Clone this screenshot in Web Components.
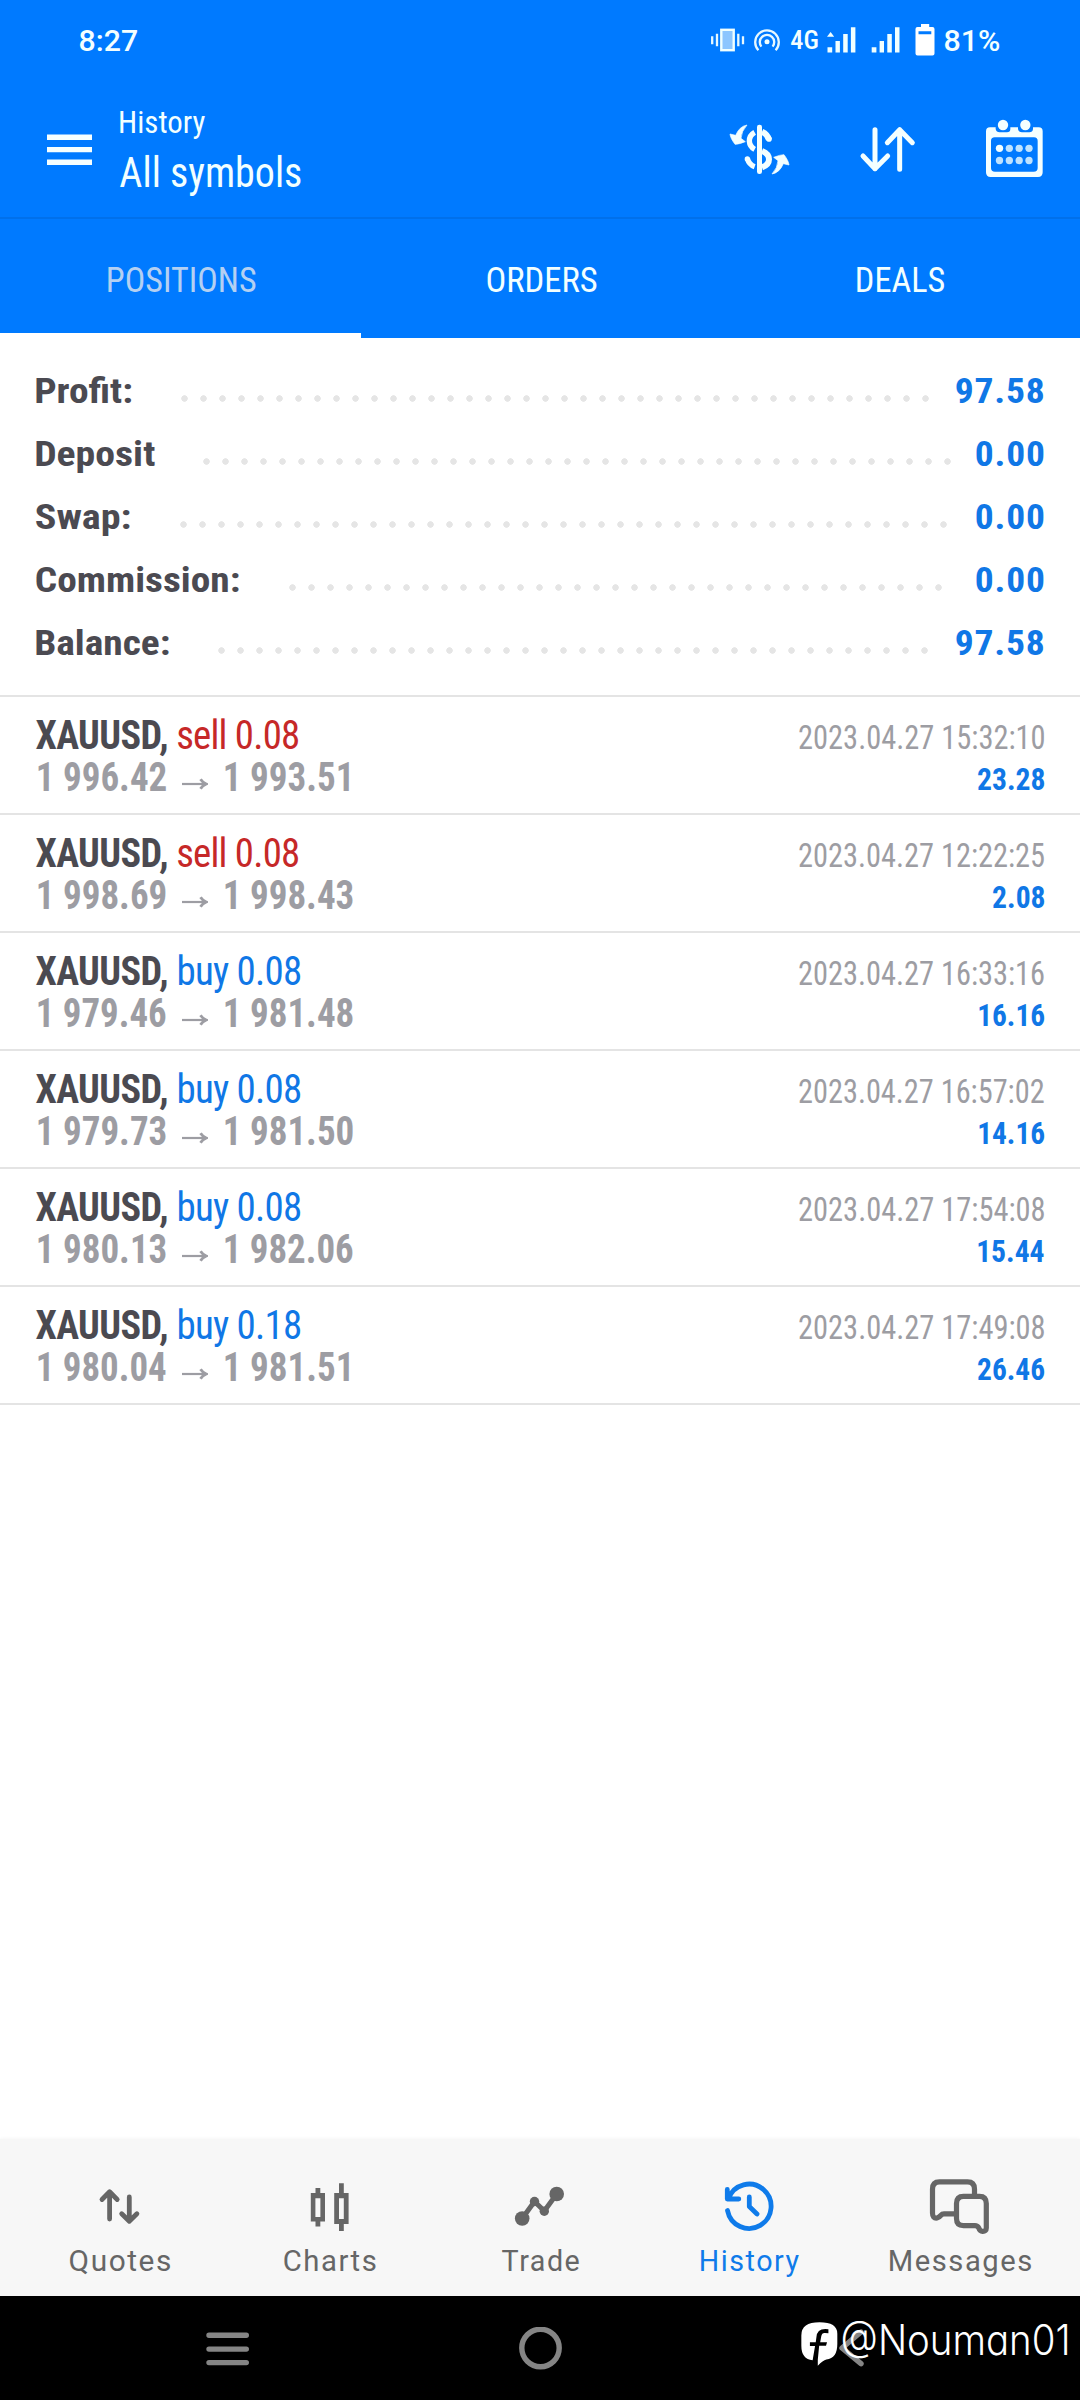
<!DOCTYPE html>
<html lang="en">
<head>
<meta charset="utf-8">
<title>History</title>
<style>
html,body{margin:0;padding:0;background:#fff}
body{width:1080px;height:2400px;overflow:hidden;font-family:"Roboto Condensed",Roboto,"Liberation Sans",sans-serif}
</style>
</head>
<body>
<trade-app></trade-app>
<script>
const pen = document.createElement('canvas').getContext('2d');

/* A word fitted to its ink box: w = ink width, h = capital height. */
class FitText extends HTMLElement {
  connectedCallback() {
    if (this.shadowRoot) return;
    const w = +this.getAttribute('w'), h = +this.getAttribute('h');
    const weight = this.getAttribute('weight') || 400;
    const ls = +(this.getAttribute('ls') || 0);
    const wide = this.hasAttribute('wide'), light = this.hasAttribute('inter');
    const fam = light ? 'Inter, sans-serif' : wide ? 'Roboto, sans-serif' : '"Roboto Condensed", Roboto, sans-serif';
    const size = h / (light ? .727 : .711);
    const st = wide || light ? 'normal' : 'condensed';
    /* measured at ten times the size, so that rounded bounds do not matter */
    pen.font = `${weight} ${size * 10}px ${fam}`;
    pen.fontStretch = st;
    pen.letterSpacing = ls * 10 + 'px';
    const m = pen.measureText(this.textContent.trim());
    const left = m.actualBoundingBoxLeft / 10;
    const ink = m.actualBoundingBoxRight / 10 + left;
    const k = w / ink;
    const A = Math.round(m.fontBoundingBoxAscent / 10), D = Math.round(m.fontBoundingBoxDescent / 10);
    const dy = h - ((h - (A + D)) / 2 + A);
    this.attachShadow({mode: 'open'}).innerHTML = `<style>
      :host{display:block;flex:none;width:${w}px;height:${h}px}
      span{display:inline-block;white-space:pre;font:${weight} ${size}px/${h}px ${fam};font-stretch:${st};letter-spacing:${ls}px;
        vertical-align:top;height:${h}px;transform-origin:0 0;transform:translate(${left * k}px,${dy}px) scaleX(${k});
        ${light ? 'font-feature-settings:"cv11","ss03";' : ''}}
    </style><span><slot></slot></span>`;
  }
}
customElements.define('fit-text', FitText);

class StatusBar extends HTMLElement {
  constructor() {
    super();
    this.attachShadow({mode: 'open'}).innerHTML = `<style>
      :host{display:flex;height:83px;box-sizing:border-box;padding:24px 81px 0 80px;justify-content:space-between;align-items:flex-start;color:#f4ffff}
      .t{padding-top:6px}
      .r{display:flex;align-items:flex-start}
      .g{margin-top:7.700px}
      .b{margin-top:5.800px}
      svg{display:block;flex:none}
    </style>
    <fit-text class="t" w="57" h="21.5" weight="500" wide>8:27</fit-text>
    <div class="r">
      <svg width="80" height="32" viewBox="711 24 80 32" fill="none" stroke="#e6f8ff" stroke-width="2.3">
        <rect x="721.3" y="29.8" width="12.4" height="20.4" fill="#8cc6ff" stroke="#f0ffff" stroke-width="2.4"/>
        <path d="M712.2 36.3v8M717 33.7v12.6M738.3 33.7v12.6M743 36.3v8"/>
        <circle cx="767" cy="41.8" r="2.5" fill="#f0ffff" stroke="none"/>
        <path d="M761.4 46.6a7.2 7.2 0 1 1 11.2 0M758.4 50.3a11.8 11.8 0 1 1 17.2 0"/>
      </svg>
      <fit-text class="g" w="26.500" h="17.8" weight="500">4G</fit-text>
      <svg style="margin-left:9px" width="118" height="33" viewBox="826.500 24 118 33" fill="#f0ffff">
        <path d="M826.5 36.7l3.6-4.8 3.6 4.8zM827 47.3h4.7v5.2H827zM835 41h4.4v11.5H835zM842.7 34h4.5v18.5h-4.5zM850.4 27.3h4.5v25.2h-4.5zM871.2 47.3h4.7v5.2h-4.7zM879.1 41h4.4v11.5h-4.4zM886.8 34h4.5v18.5h-4.5zM894.5 27.3h4.5v25.2h-4.5z"/>
        <path fill-rule="evenodd" fill="#fff" d="M920.5 24h8.2v3H932q2 0 2 2v24.5q0 2-2 2h-15q-2 0-2-2V29q0-2 2-2h3.500zM918 31.200v3.100h12.800v-3.100z"/>
      </svg>
      <fit-text class="b" w="54.5" h="21.5" weight="500" wide>81%</fit-text>
    </div>`;
  }
}
customElements.define('status-bar', StatusBar);

class AppHeader extends HTMLElement {
  constructor() {
    super();
    this.attachShadow({mode: 'open'}).innerHTML = `<style>
      :host{display:flex;height:134px;box-sizing:border-box;padding:27.5px 36px 0 47px;align-items:flex-start;color:#f2ffff}
      svg{display:block;flex:none}
      .m{margin-top:23.500px}
      .n{flex:1;margin-left:28px;display:flex;flex-direction:column;gap:24px}
      .i{margin-top:4.500px}
    </style>
    <svg class="m" width="45" height="32" viewBox="0 0 45 32"><path fill="#f6ffff" d="M0 .5h45V6H0zM0 13h45v5.300H0zM0 25.500h45V31H0z"/></svg>
    <div class="n"><fit-text w="85" h="22.8">History</fit-text><fit-text w="181" h="30.300">All symbols</fit-text></div>
    <svg class="i" width="318" height="64" viewBox="78 75 954 192" fill="#f4ffff">
      <rect x="171" y="104" width="15" height="148" rx="7"/>
      <path fill="none" stroke="#f4ffff" stroke-width="16" stroke-linecap="butt" d="M164 127Q148 136 148 153Q149 170 164 178M142 205Q147 224 164 230"/>
      <path fill="none" stroke="#f4ffff" stroke-width="18" d="M186 125Q203 133 207 149M186 183Q207 191 207 208Q207 225 186 232"/>
      <circle cx="207" cy="147" r="8.500"/><circle cx="142" cy="207" r="8"/>
      <path d="M141 105Q118 109 107 136L90 132Q91 144 105 163Q116 163 136 155L123 145Q124 124 141 105Z" stroke="#f4ffff" stroke-width="2" stroke-linejoin="round"/>
      <path transform="rotate(180 178.500 178.500)" d="M141 105Q118 109 107 136L90 132Q91 144 105 163Q116 163 136 155L123 145Q124 124 141 105Z" stroke="#f4ffff" stroke-width="2" stroke-linejoin="round"/>
      <path fill="none" stroke="#f4ffff" stroke-width="15" stroke-linecap="round" stroke-linejoin="round" d="M525 119V236M489 198l36 38 38-38M599 238V119M562 158l37-39 38 39"/>
      <path fill-rule="evenodd" d="M870 112H887V117Q889 127 899 127H921Q931 127 931 117V112H954V117Q956 127 966 127H988Q998 127 999 117V112H1016Q1028 112 1028 124V247Q1028 261 1014 261H872Q858 261 858 247V124Q858 112 870 112ZM884 142Q873 142 873 153V234Q873 245 885 245H1001Q1013 245 1013 234V153Q1013 142 1002 142Z"/>
      <circle cx="909" cy="105" r="15.500"/><circle cx="976" cy="105" r="15.500"/>
      <circle cx="898.500" cy="175" r="11"/>
      <g fill="#bfe3ff"><circle cx="928" cy="175" r="11"/><circle cx="957.500" cy="175" r="11"/><circle cx="987" cy="175" r="11"/><circle cx="898.500" cy="211.500" r="11"/><circle cx="928" cy="211.500" r="11"/><circle cx="957.500" cy="211.500" r="11"/><circle cx="987" cy="211.500" r="11"/></g>
    </svg>`;
  }
}
customElements.define('app-header', AppHeader);

class TabBar extends HTMLElement {
  constructor() {
    super();
    this.attachShadow({mode: 'open'}).innerHTML = `<style>
      :host{display:flex;height:121px;box-sizing:border-box;border-top:2px solid #0070eb;color:#f2ffff}
      div{flex:1;display:flex;justify-content:center;padding-top:48px;padding-left:1px;box-sizing:border-box}
      .on{border-bottom:5px solid #fff;color:#b4d0f2;padding-left:3px}
    </style>
    <div class="on"><fit-text w="147.500" h="25">POSITIONS</fit-text></div>
    <div><fit-text w="109.500" h="25">ORDERS</fit-text></div>
    <div><fit-text w="87" h="25">DEALS</fit-text></div>`;
  }
}
customElements.define('tab-bar', TabBar);

/* label, dotted leader and value; start = left edge of the leader, n = its dots */
class SummaryRow extends HTMLElement {
  connectedCallback() {
    if (this.shadowRoot) return;
    const a = n => this.getAttribute(n);
    this.attachShadow({mode: 'open'}).innerHTML = `<style>
      :host{display:flex;height:24.500px;padding:0 36.500px 0 36px;justify-content:flex-start}
      .l{color:#4b4a51}
      .d{flex:none;margin-left:${a('start') - 36 - a('lw')}px;margin-top:10px;width:${a('n') * 19}px;height:19px;
        background:radial-gradient(circle at 50% 50%,#e5e5e5 2.900px,rgba(229,229,229,0) 3.600px) 0 0/19px 19px repeat-x}
      .v{margin-left:auto;color:#1077e6}
    </style>
    <fit-text class="l" w="${a('lw')}" h="24.500" weight="700">${a('label')}</fit-text>
    <div class="d"></div>
    <fit-text class="v" w="${a('vw')}" h="24.500" weight="700" ls=".700">${a('value')}</fit-text>`;
  }
}
customElements.define('summary-row', SummaryRow);

class DealRow extends HTMLElement {
  connectedCallback() {
    if (this.shadowRoot) return;
    const a = n => this.getAttribute(n), sell = a('side').startsWith('sell');
    this.attachShadow({mode: 'open'}).innerHTML = `<style>
      :host{display:flex;height:118px;box-sizing:border-box;border-bottom:2px solid #e4e4e4;padding:24px 36px 0 35.500px;justify-content:space-between}
      .c,.r{display:flex;flex-direction:column}
      .c{gap:13.500px}
      .ln{display:flex}
      .s{color:#4b4a51}.t{color:${sell ? '#c62828' : '#1077e6'};margin-left:${sell ? 12 : 12.5}px}
      .p{color:#9d9da3;padding-left:2px}
      svg{display:block;margin:14px 16.500px 0 16.500px}
      .r{align-items:flex-end;padding-top:5px;gap:19.200px}
      .dt{color:#9d9da3}.pr{color:#1077e6}
    </style>
    <div class="c">
      <div class="ln"><fit-text class="s" w="130.500" h="28.300" weight="700" ls="-.600">XAUUSD,</fit-text><fit-text class="t" w="${sell ? 120 : 121}" h="28.300" ls="-.800">${a('side')}</fit-text></div>
      <div class="ln p"><fit-text w="128" h="28.300" weight="700">${a('from')}</fit-text>
        <svg width="26" height="14" viewBox="0 0 26 14" fill="none" stroke="#9d9da3" stroke-width="2.200"><path d="M0 7H23"/><path d="M18.500 2.300Q20.500 5.500 24.300 7Q20.500 8.500 18.500 11.700" stroke-width="2.800"/></svg>
        <fit-text w="${a('tw') || 128}" h="28.300" weight="700">${a('to')}</fit-text></div>
    </div>
    <div class="r">
      <fit-text class="dt" w="245" h="23">${a('time')}</fit-text>
      <fit-text class="pr" w="${a('pw')}" h="22.800" weight="700">${a('profit')}</fit-text>
    </div>`;
  }
}
customElements.define('deal-row', DealRow);

class NavItem extends HTMLElement {
  connectedCallback() {
    if (this.shadowRoot) return;
    this.attachShadow({mode: 'open'}).innerHTML = `<style>
      :host{flex:1;display:flex;flex-direction:column;align-items:center;color:${this.hasAttribute('active') ? '#0f7bea' : '#666'}}
      ::slotted(svg){display:block;overflow:visible;margin-bottom:9.500px}
    </style><slot></slot><fit-text w="${this.getAttribute('w')}" h="21.500" ls="1.600" wide>${this.getAttribute('label')}</fit-text>`;
  }
}
customElements.define('nav-item', NavItem);

class BottomNav extends HTMLElement {
  constructor() {
    super();
    this.attachShadow({mode: 'open'}).innerHTML = `<style>
      :host{display:flex;height:157px;box-sizing:border-box;padding:41px 15px 0 15px;background:#f7f7f7;box-shadow:0 -1px 3px rgba(0,0,0,.03)}
      svg{fill:none;stroke:currentColor;stroke-linecap:round;stroke-linejoin:round}
    </style>
    <nav-item label="Quotes" w="100"><svg width="60" height="60" viewBox="90 2180 60 60" stroke-width="4.800"><path d="M109.600 2219V2192M102 2199.500l7.600-7.700 7.600 7.700M129.300 2197V2221M121.700 2213.700l7.600 7.600 7.600-7.600"/></svg></nav-item>
    <nav-item label="Charts" w="91.500"><svg width="60" height="60" viewBox="300 2180 60 60" stroke="none" style="stroke:none;fill:#666"><path fill-rule="evenodd" d="M315.500 2188h4.800v5h4.700v28.500h-4.700v5h-4.800v-5h-4.700V2193h4.700zM315.400 2198.200v18.800h5v-18.800zM339 2183.300h4.800v9.700h4.800v31h-4.800v7H339v-7h-4.800v-31h4.800zM339 2198.200v20.800h4.800v-20.800z"/></svg></nav-item>
    <nav-item label="Trade" w="77"><svg width="60" height="60" viewBox="510 2180 60 60" stroke-width="5"><path d="M522.200 2218.500L534.500 2201.500L544.300 2211L556.700 2194"/><g fill="#666" stroke="none"><circle cx="522.200" cy="2218.500" r="7.300"/><circle cx="534.500" cy="2201.500" r="4.700"/><circle cx="544.300" cy="2211.300" r="4.700"/><circle cx="556.700" cy="2194" r="7.300"/></g></svg></nav-item>
    <nav-item label="History" w="98" active><svg width="60" height="60" viewBox="720 2180 60 60" stroke-width="4.800"><path d="M727.300 2189.500V2199H738.800M728.500 2198.500A22 22.200 0 1 1 727.500 2210.500M749.300 2197V2206.500L757 2214"/></svg></nav-item>
    <nav-item label="Messages" w="141"><svg width="60" height="60" viewBox="930 2180 60 60" stroke-width="5.200"><path d="M974.500 2194V2189Q974.500 2181.800 967.500 2181.800H939.500Q932.500 2181.800 932.500 2189V2213Q932.500 2218.500 937 2218Q939 2217.500 941 2215.200Q942 2213.800 944 2213.800H954"/><path d="M963.500 2196.300H979.500Q986.300 2196.300 986.300 2203.500V2228Q986.300 2231.500 982.500 2231.300Q979.800 2231.300 978.800 2228Q977.500 2225.600 975 2225.600H963.500Q956.500 2225.600 956.500 2218.500V2203.500Q956.500 2196.300 963.500 2196.300Z"/></svg></nav-item>`;
  }
}
customElements.define('bottom-nav', BottomNav);

class SystemNav extends HTMLElement {
  constructor() {
    super();
    this.attachShadow({mode: 'open'}).innerHTML = `<style>
      :host{display:flex;position:relative;height:104px;background:#000;box-sizing:border-box;padding:31px 0 0 206px;align-items:flex-start}
      svg{display:block;flex:none;fill:none;stroke:#858585;stroke-width:5.400;stroke-linecap:round;stroke-linejoin:round}
      .w{position:absolute;right:14.500px;top:26px;display:flex;gap:5.500px;color:#fff}
      .w svg{stroke:none;fill:#fff}
      .w fit-text{margin-top:3px}
    </style>
    <svg width="43" height="44" viewBox="206 2327 43 44"><path d="M209 2335.300H246.300M209 2349.100H246.300M209 2362.600H246.300"/></svg>
    <svg style="margin-left:269.500px" width="43" height="44" viewBox="518.500 2327 43 44"><circle cx="540" cy="2348" r="18.700"/></svg>
    <svg style="margin-left:276.500px" width="26" height="44" viewBox="838 2327 26 44"><path d="M861 2332L842 2348L861 2363.700"/></svg>
    <div class="w">
      <svg width="37" height="44" viewBox="756 606 108 128" preserveAspectRatio="none"><path fill-rule="evenodd" d="M810 607Q862 607 862 640V670Q862 712 830 715Q820 717 805 733L805 716L809 675H829L832 665H812L815 648Q817 637 826 638L836 639V627Q803 622 801 650L799 665H782V676H797L790 717Q757 714 757 675V645Q757 607 810 607Z"/></svg>
      <fit-text w="222.500" h="30.300" weight="300" inter>@Nouman01</fit-text>
    </div>`;
  }
}
customElements.define('system-nav', SystemNav);

class TradeApp extends HTMLElement {
  constructor() {
    super();
    this.attachShadow({mode: 'open'}).innerHTML = `<style>
      :host{display:flex;flex-direction:column;width:1080px;height:2400px;background:#fff}
      header{background:#007aff}
      section{display:flex;flex-direction:column;gap:38.500px;height:359px;box-sizing:border-box;padding-top:40.500px;border-bottom:2px solid #e4e4e4}
      main{flex:1}
    </style>
    <header><status-bar></status-bar><app-header></app-header><tab-bar></tab-bar></header>
    <section>
      <summary-row label="Profit:" lw="95.500" start="175.200" n="40" value="97.58" vw="87.500"></summary-row>
      <summary-row label="Deposit" lw="119" start="197.300" n="40" value="0.00" vw="67.500"></summary-row>
      <summary-row label="Swap:" lw="94" start="173.500" n="41" value="0.00" vw="67.500"></summary-row>
      <summary-row label="Commission:" lw="203" start="282.500" n="35" value="0.00" vw="67.500"></summary-row>
      <summary-row label="Balance:" lw="133" start="212.400" n="38" value="97.58" vw="87.500"></summary-row>
    </section>
    <main>
      <deal-row side="sell 0.08" from="1 996.42" to="1 993.51" tw="124" time="2023.04.27 15:32:10" profit="23.28" pw="66.500"></deal-row>
      <deal-row side="sell 0.08" from="1 998.69" to="1 998.43" time="2023.04.27 12:22:25" profit="2.08" pw="51.500"></deal-row>
      <deal-row side="buy 0.08" from="1 979.46" to="1 981.48" time="2023.04.27 16:33:16" profit="16.16" pw="65.500"></deal-row>
      <deal-row side="buy 0.08" from="1 979.73" to="1 981.50" time="2023.04.27 16:57:02" profit="14.16" pw="65.500"></deal-row>
      <deal-row side="buy 0.08" from="1 980.13" to="1 982.06" time="2023.04.27 17:54:08" profit="15.44" pw="66"></deal-row>
      <deal-row side="buy 0.18" from="1 980.04" to="1 981.51" tw="124" time="2023.04.27 17:49:08" profit="26.46" pw="66.500"></deal-row>
    </main>
    <bottom-nav></bottom-nav>
    <system-nav></system-nav>`;
  }
}
customElements.define('trade-app', TradeApp);
</script>
</body>
</html>
